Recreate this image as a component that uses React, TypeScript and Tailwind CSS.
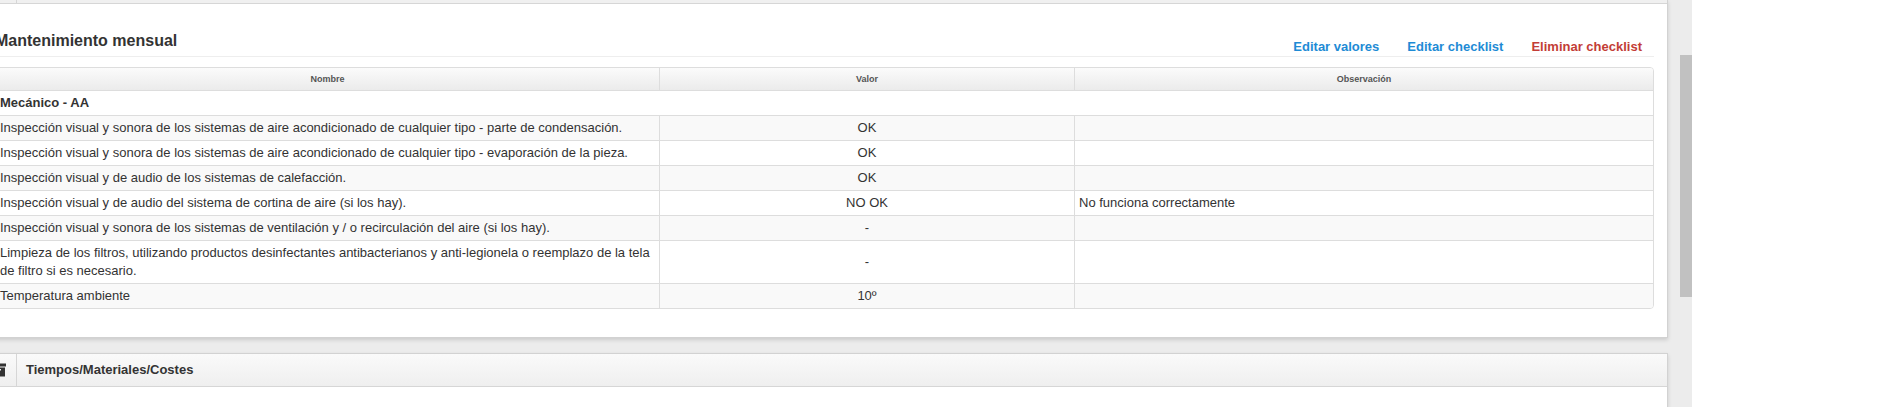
import React from "react";

type Row = { n: string; v: string; o: string };

const rows: Row[] = [
  {
    n: "Inspección visual y sonora de los sistemas de aire acondicionado de cualquier tipo - parte de condensación.",
    v: "OK",
    o: "",
  },
  {
    n: "Inspección visual y sonora de los sistemas de aire acondicionado de cualquier tipo - evaporación de la pieza.",
    v: "OK",
    o: "",
  },
  { n: "Inspección visual y de audio de los sistemas de calefacción.", v: "OK", o: "" },
  {
    n: "Inspección visual y de audio del sistema de cortina de aire (si los hay).",
    v: "NO OK",
    o: "No funciona correctamente",
  },
  {
    n: "Inspección visual y sonora de los sistemas de ventilación y / o recirculación del aire (si los hay).",
    v: "-",
    o: "",
  },
  {
    n: "Limpieza de los filtros, utilizando productos desinfectantes antibacterianos y anti-legionela o reemplazo de la tela de filtro si es necesario.",
    v: "-",
    o: "",
  },
  { n: "Temperatura ambiente", v: "10º", o: "" },
];

function ArchiveIcon() {
  return (
    <svg width="14" height="14" viewBox="0 0 14 14" className="block">
      <rect x="0" y="0.5" width="14" height="3" fill="#333" />
      <rect x="1" y="4.5" width="12" height="9" fill="#333" />
      <rect x="5" y="6" width="4" height="1.5" fill="#f4f4f4" />
    </svg>
  );
}

export default function App() {
  return (
    <div className="flex h-[407px] w-[1879px] overflow-hidden bg-white font-['Liberation_Sans',Arial,sans-serif] text-[#333]">
      <div className="flex h-full w-[1692px] shrink-0 bg-[#ececec]">
        <div className="h-full w-[1680px] shrink-0 overflow-hidden">
          <div className="-ml-[20px] mr-[12px]">
            {/* Panel: Mantenimiento mensual */}
            <section className="border-x border-b border-[#d2d2d2] bg-white shadow-[0_2px_4px_rgba(0,0,0,0.14)]">
              <div className="flex h-[4px] border-b border-[#d6d6d6] bg-[#f0f0f0]">
                <div className="w-[36px] border-r border-[#d6d6d6]" />
              </div>
              <div className="pb-[28px] pl-[14px] pr-[13px] pt-[27px]">
                <div className="flex items-end justify-between border-b border-[#eeeeee]">
                  <h2 className="mb-[5px] text-[16px] font-bold leading-[20px] text-[#333]">
                    Mantenimiento mensual
                  </h2>
                  <div className="flex gap-[28px] pr-[12px] text-[13px] font-bold leading-[18px]">
                    <a className="text-[#1e8bd5]">Editar valores</a>
                    <a className="text-[#1e8bd5]">Editar checklist</a>
                    <a className="text-[#c33d36]">Eliminar checklist</a>
                  </div>
                </div>

                <div className="mt-[10px] overflow-hidden rounded-[4px] border border-[#dddddd] text-[13px] leading-[18px]">
                  <div className="grid h-[23px] grid-cols-[663px_415px_1fr] border-b border-[#dddddd] bg-linear-to-b from-[#fbfbfb] to-[#ebebeb] text-[9px] font-bold text-[#555]">
                    <div className="flex items-center justify-center">Nombre</div>
                    <div className="flex items-center justify-center border-l border-[#dddddd]">Valor</div>
                    <div className="flex items-center justify-center border-l border-[#dddddd]">Observación</div>
                  </div>
                  <div className="bg-white px-[4px] py-[3px] font-bold">Mecánico - AA</div>
                  {rows.map((r, i) => (
                    <div
                      key={i}
                      className={
                        "grid grid-cols-[663px_415px_1fr] border-t border-[#dddddd] " +
                        (i % 2 === 0 ? "bg-[#f9f9f9]" : "bg-white")
                      }
                    >
                      <div className="px-[4px] py-[3px]">{r.n}</div>
                      <div className="flex items-center justify-center border-l border-[#dddddd] px-[4px] py-[3px]">
                        {r.v}
                      </div>
                      <div className="flex items-center border-l border-[#dddddd] px-[4px] py-[3px]">{r.o}</div>
                    </div>
                  ))}
                </div>
              </div>
            </section>

            {/* Panel: Tiempos/Materiales/Costes */}
            <section className="mt-[15px] border border-[#d2d2d2] bg-white shadow-[0_2px_4px_rgba(0,0,0,0.14)]">
              <div className="flex h-[33px] border-b border-[#d6d6d6] bg-linear-to-b from-[#fafafa] to-[#efefef]">
                <div className="flex w-[36px] items-center justify-center border-r border-[#d6d6d6]">
                  <ArchiveIcon />
                </div>
                <div className="flex items-center pl-[9px] text-[13px] font-bold text-[#333]">
                  Tiempos/Materiales/Costes
                </div>
              </div>
              <div className="h-[120px]" />
            </section>
          </div>
        </div>
        <div className="w-[12px] shrink-0 bg-[#ececec]">
          <div className="mt-[55px] h-[242px] bg-[#c1c1c1]" />
        </div>
      </div>
      <div className="flex-1 bg-white" />
    </div>
  );
}
